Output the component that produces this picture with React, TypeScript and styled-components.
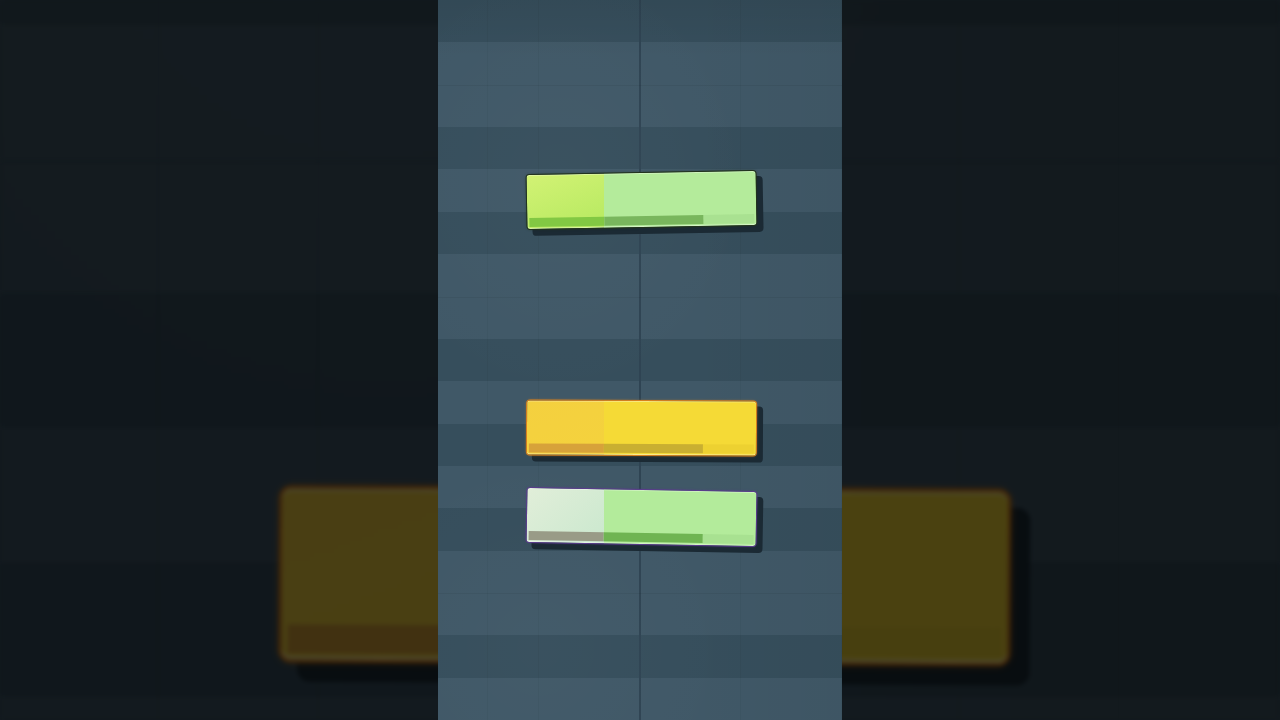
import styled, { createGlobalStyle } from 'styled-components'

const GlobalStyle = createGlobalStyle`
  html, body {
    margin: 0;
    padding: 0;
    background: #131a1f;
    font-family: "Liberation Sans", Arial, sans-serif;
  }
`

type Palette = {
  head: string
  body: string
  edge: string
  stripHead: string
  stripMid: string
  stripTail: string
}

const palettes: Record<string, Palette> = {
  lime: {
    head: 'linear-gradient(160deg, #d2f274 0%, #b8ea62 55%, #a4e357 100%)',
    body: '#b4eb9b',
    edge: '#22331d',
    stripHead: '#82c843',
    stripMid: '#79b65d',
    stripTail: 'rgba(70, 130, 40, 0.09)',
  },
  yellow: {
    head: 'linear-gradient(160deg, #f4d03f 0%, #f4d43b 100%)',
    body: '#f5da36',
    edge: '#d8801e',
    stripHead: '#d7a23a',
    stripMid: '#c9af31',
    stripTail: 'rgba(150, 110, 0, 0.08)',
  },
  mint: {
    head: 'linear-gradient(135deg, #e1eed9 0%, #c6e7cc 55%, #b4e1c7 100%)',
    body: '#b3eb9b',
    edge: '#5a3c8c',
    stripHead: '#999b87',
    stripMid: '#6fb452',
    stripTail: 'rgba(70, 130, 40, 0.09)',
  },
}

// descending from Gb: true = black key row
const keys = [true, false, false, true, false, true, false, false, true, false, true, false, true, false, false, true, false]
// light rows that sit straight under another light row (E/F and B/C)
const seams = keys.map((k, i) => !k && i > 0 && !keys[i - 1])

const notes = [
  { tone: 'lime', x: 89, y: 173, tilt: -1 },
  { tone: 'yellow', x: 89, y: 401, tilt: 0.3 },
  { tone: 'mint', x: 89, y: 490, tilt: 1 },
]

const PianoRoll = () => (
  <Roll>
    {keys.map((black, i) => (
      <KeyRow key={i} $black={black} $seam={seams[i]} />
    ))}
    {notes.map((n, i) => {
      const p = palettes[n.tone]
      return (
        <Note key={i} $x={n.x} $y={n.y} $tilt={n.tilt} $p={p}>
          <Strip>
            <StripSeg $w={75} $c={p.stripHead} />
            <StripSeg $w={99} $c={p.stripMid} />
            <StripSeg $c={p.stripTail} />
          </Strip>
        </Note>
      )
    })}
  </Roll>
)

export default function App() {
  return (
    <>
      <GlobalStyle />
      <Stage>
        <Backdrop>
          <Zoomed>
            <PianoRoll />
          </Zoomed>
        </Backdrop>
        <Front>
          <PianoRoll />
        </Front>
      </Stage>
    </>
  )
}

const Stage = styled.div`
  display: grid;
  width: 1280px;
  height: 720px;
  overflow: hidden;
  background: #131a1f;
`

const Backdrop = styled.div`
  grid-area: 1 / 1;
  display: grid;
  justify-items: start;
  align-items: start;
  overflow: hidden;
  filter: brightness(0.3) blur(2px);
`

const Zoomed = styled.div`
  width: 404px;
  height: 720px;
  transform-origin: 202px 400px;
  transform: translate(438px, 87px) scale(3.17);
`

const Front = styled.div`
  grid-area: 1 / 1;
  display: flex;
  justify-content: center;
  position: relative;
`

const Roll = styled.div`
  position: relative;
  width: 404px;
  height: 720px;
  display: flex;
  flex-direction: column;
  overflow: hidden;

  &::after {
    content: '';
    position: absolute;
    inset: 0;
    z-index: 0;
    pointer-events: none;
    background:
      radial-gradient(ellipse 70% 45% at 30% 25%, rgba(255, 255, 255, 0.025), transparent 70%),
      radial-gradient(ellipse 70% 40% at 25% 90%, rgba(255, 255, 255, 0.02), transparent 70%),
      linear-gradient(180deg, rgba(0, 0, 0, 0.07) 0%, transparent 8%),
      linear-gradient(90deg, transparent 60%, rgba(0, 0, 0, 0.03) 100%);
  }
`

const KeyRow = styled.div<{ $black: boolean; $seam: boolean }>`
  flex: 1;
  box-sizing: border-box;
  background-color: ${p => (p.$black ? '#364e5c' : '#405867')};
  background-image:
    linear-gradient(90deg, transparent 201px, #2f4453 201px, #2f4453 203px, transparent 203px),
    repeating-linear-gradient(90deg, transparent 0, transparent 49.5px, rgba(0, 0, 0, 0.04) 49.5px, rgba(0, 0, 0, 0.04) 50.5px);
  border-top: 1px solid ${p => (p.$seam ? 'rgba(0, 0, 0, 0.05)' : 'transparent')};
`

const Note = styled.div<{ $x: number; $y: number; $tilt: number; $p: Palette }>`
  position: absolute;
  z-index: 1;
  left: ${p => p.$x}px;
  top: ${p => p.$y}px;
  width: 229px;
  height: 54px;
  box-sizing: border-box;
  border-radius: 3px;
  transform: rotate(${p => p.$tilt}deg);
  background:
    linear-gradient(90deg, transparent 77px, ${p => p.$p.body} 77px),
    ${p => p.$p.head};
  box-shadow:
    inset 0 1px 0 rgba(255, 255, 255, 0.35),
    inset 0 -1px 0 rgba(255, 255, 255, 0.45),
    0 0 0 1px ${p => p.$p.edge},
    0 0 3px ${p => p.$p.edge},
    6px 6px 0 1px #1b2a34;
`

const Strip = styled.div`
  position: absolute;
  left: 2px;
  right: 2px;
  bottom: 2px;
  height: 9px;
  display: flex;
`

const StripSeg = styled.div<{ $w?: number; $c: string }>`
  ${p => (p.$w ? `width: ${p.$w}px;` : 'flex: 1;')}
  background: ${p => p.$c};
`
